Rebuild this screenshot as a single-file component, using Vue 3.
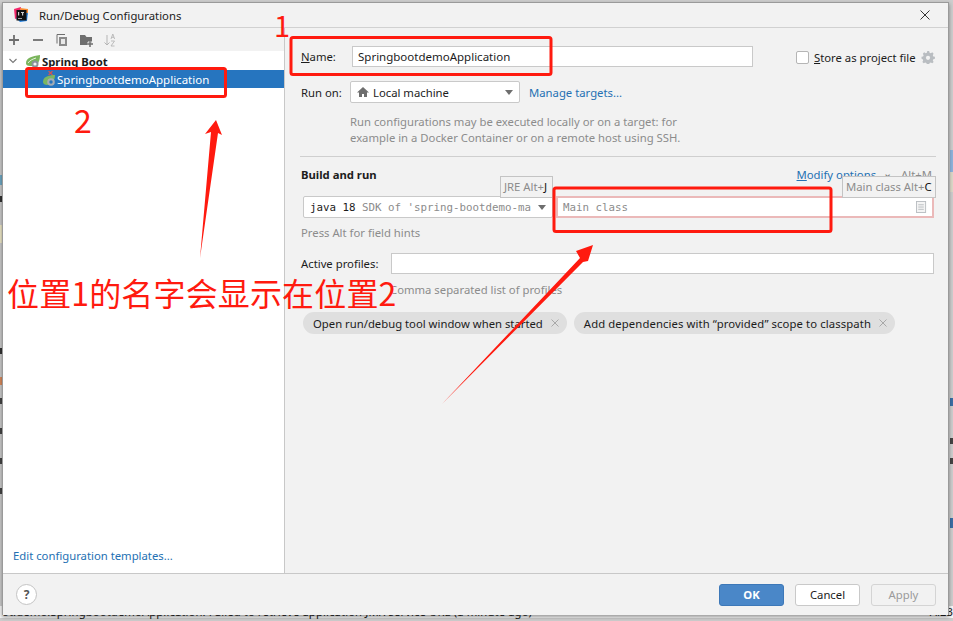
<template>
  <div class="page">
    <div class="backdrop-status">ot.demo.SpringbootdemoApplication: Failed to retrieve application JMX service URL (a minute ago)</div>
    <div class="backdrop-time">A:23</div>
    <i v-for="bit in backdropBits" :key="bit.top + bit.left" class="backdrop-bit" :style="bit"></i>

    <div class="dialog">
      <header class="titlebar">
        <svg class="app-logo" viewBox="0 0 16 16" width="16" height="16">
          <path d="M1 2 L8 0 L7 10 L2 12Z" fill="#f2266a" />
          <path d="M7 1 L15 2 L15 8 L9 8Z" fill="#fb8c2f" />
          <path d="M3 11 L7 15 L14 14 L15 6 L8 6Z" fill="#2586e8" />
          <rect x="3.500" y="3" width="10" height="10.500" fill="#111" />
          <path d="M5 5h1.200v3.500H5zM8 5h3v1H10.200v2.500H9V6H8zM5 11.300h4v.7H5z" fill="#ccc" />
        </svg>
        <span class="title">Run/Debug Configurations</span>
        <svg class="close" viewBox="0 0 10 10" width="10" height="10">
          <path d="M.5.500l9 9M9.500.500l-9 9" stroke="#333" stroke-width="1" fill="none" />
        </svg>
      </header>

      <div class="body">
        <aside class="sidebar">
          <div class="toolbar">
            <svg v-for="icon in toolbarIcons" :key="icon.name" viewBox="0 0 16 16" width="16" height="16" v-html="icon.svg"></svg>
          </div>
          <div class="tree">
            <div class="tree-row group-row">
              <svg class="chevron" viewBox="0 0 10 10" width="10" height="10">
                <path d="M1.500 3 L5 6.500 L8.500 3" fill="none" stroke="#777" stroke-width="1.100" />
              </svg>
              <svg class="boot-icon" viewBox="0 0 16 16" width="16" height="16">
                <path d="M1 10 C1 5 7 3 15 2 C15 8 13 13 7 13 C4 13 1 13 1 10Z" fill="#7ab55c" />
                <path d="M3 10 C5 7 8 6 11 5" stroke="#fff" stroke-width=".8" fill="none" />
                <circle cx="10" cy="11" r="3.500" fill="#8b9299" />
                <circle cx="10" cy="11" r="1.600" fill="#f2f2f2" />
              </svg>
              <span class="group-label">Spring Boot</span>
            </div>
            <div class="tree-row selected-row">
              <svg class="boot-icon" viewBox="0 0 16 16" width="16" height="16">
                <path d="M1 11 C1 6 6 4 13 4 C13 10 9 14 5 14 C3 14 1 13 1 11Z" fill="#7bb661" />
                <circle cx="9" cy="11" r="3.800" fill="#a3acb5" />
                <circle cx="9" cy="11" r="1.700" fill="#2675bf" />
                <path d="M6.500 0l4 4M10.500 0l-4 4" stroke="#d9534f" stroke-width="1.100" />
              </svg>
              <span class="config-name">SpringbootdemoApplication</span>
            </div>
          </div>
          <a class="link templates">Edit configuration templates...</a>
        </aside>

        <main class="form">
          <div class="name-row">
            <label class="row-label name-label"><u>N</u>ame:</label>
            <input class="text-input name-input" value="SpringbootdemoApplication" />
            <span class="checkbox"></span>
            <span class="store-label"><u>S</u>tore as project file</span>
            <svg class="gear" viewBox="0 0 16 16" width="14" height="14">
              <path d="M8 1l1.300.2.500 1.800 1.400.6 1.700-.9 1.500 1.500-.9 1.700.6 1.400 1.800.5v2.200l-1.800.5-.6 1.400.9 1.700-1.500 1.500-1.700-.9-1.400.6-.5 1.800H6.700l-.5-1.800-1.400-.6-1.700.9-1.500-1.500.9-1.700-.6-1.400L.6 10V7.800l1.800-.5.6-1.400-.9-1.700L3.600 2.700l1.700.9 1.400-.6.5-1.800z" fill="#b9bdc1" />
              <circle cx="8" cy="8.900" r="2.400" fill="#f2f2f2" />
            </svg>
          </div>

          <div class="run-row">
            <label class="row-label">Run on:</label>
            <div class="select local-select">
              <svg viewBox="0 0 12 12" width="12" height="12">
                <path d="M6 1 L12 6.500 H10 V11 H7 V8 H5 V11 H2 V6.500 H0Z" fill="#6e6e6e" />
              </svg>
              <span class="select-text">Local machine</span>
              <i class="caret"></i>
            </div>
            <a class="link">Manage targets...</a>
          </div>

          <p class="hint run-hint">Run configurations may be executed locally or on a target: for<br />example in a Docker Container or on a remote host using SSH.</p>

          <hr class="separator" />

          <div class="section-head">
            <strong>Build and run</strong>
            <span class="modify"><a class="link"><u>M</u>odify options</a><span class="modify-chevron">⌄</span><span class="shortcut">Alt+M</span></span>
          </div>

          <div class="build-row">
            <div class="select jre-select">
              <span class="mono"><b>java 18</b> SDK of 'spring-bootdemo-ma</span>
              <i class="caret"></i>
            </div>
            <div class="main-class">
              <span class="mono">Main class</span>
              <svg viewBox="0 0 12 14" width="11" height="13">
                <rect x=".5" y=".5" width="10" height="12" fill="#f4f4f4" stroke="#b8bcc0" />
                <path d="M2.500 4h6M2.500 6.500h6M2.500 9h6" stroke="#b8bcc0" />
              </svg>
            </div>
          </div>

          <p class="hint press-hint">Press Alt for field hints</p>

          <div class="profiles-row">
            <label class="row-label">Active profiles:</label>
            <input class="text-input profiles-input" />
          </div>
          <p class="hint comma-hint">Comma separated list of profiles</p>

          <div class="chips">
            <span v-for="chip in chips" :key="chip" class="chip">{{ chip }}<svg viewBox="0 0 8 8" width="8" height="8"><path d="M.5.500l7 7M7.500.500l-7 7" stroke="#a8a8a8" fill="none" /></svg></span>
          </div>

          <span class="key-tip jre-tip">JRE Alt+<b>J</b></span>
          <span class="key-tip main-tip">Main class Alt+<b>C</b></span>
        </main>
      </div>

      <footer class="footer">
        <button class="help">?</button>
        <div class="buttons">
          <button class="btn primary">OK</button>
          <button class="btn">Cancel</button>
          <button class="btn disabled">Apply</button>
        </div>
      </footer>
    </div>

    <!-- red markup drawn on top of the screenshot -->
    <svg class="markup" viewBox="0 0 953 621" width="953" height="621">
      <g fill="none" stroke="#ff1a0f" stroke-width="3">
        <rect x="291" y="37.500" width="260" height="37" rx="2" />
        <rect x="26.500" y="68.500" width="199" height="28" rx="2" />
        <rect x="554" y="188" width="277" height="43.500" rx="2" />
      </g>
      <g fill="#ff1a0f">
        <polygon points="216,120 222,135 218,133 200,258 211,132 205,134" />
        <polygon points="593,245 588,261 583,262 442,404 580,258 576,251" />
      </g>
    </svg>
    <span class="note num-one">1</span>
    <span class="note num-two">2</span>
    <span class="note big-note">位置1的名字会显示在位置2</span>
  </div>
</template>

<script setup>
const chips = [
  'Open run/debug tool window when started',
  'Add dependencies with “provided” scope to classpath',
]

const toolbarIcons = [
  { name: 'add', svg: '<path d="M8 3v10M3 8h10" stroke="#6e6e6e" stroke-width="1.800"/>' },
  { name: 'remove', svg: '<path d="M3 8h10" stroke="#6e6e6e" stroke-width="1.800"/>' },
  { name: 'copy', svg: '<path d="M3 2.500h8M3 2.500v9" stroke="#6e6e6e" fill="none"/><rect x="5" y="5" width="8" height="9" fill="#8a8a8a"/><rect x="7" y="7" width="4" height="5" fill="#e8e8e8"/>' },
  { name: 'folder', svg: '<path d="M2 3h5l1.500 2H14v8H2z" fill="#6e6e6e"/><path d="M12 9v6M9 12h6" stroke="#f2f2f2" stroke-width="3"/><path d="M12 9v6M9 12h6" stroke="#6e6e6e" stroke-width="1.500"/>' },
  { name: 'sort', svg: '<path d="M5 3v10M2.500 10.500L5 13l2.500-2.500" stroke="#b5b5b5" fill="none"/><path d="M9 7l1.800-5 1.800 5M9.700 5.300h2.300M9 9h3.500L9 14h3.500" stroke="#b5b5b5" fill="none" stroke-width=".9"/>' },
]

// slivers of the IDE window that peek out beside the dialog
const backdropBits = [
  { left: '0', top: '175px', height: '10px', background: '#6fa8c4' },
  { left: '0', top: '196px', height: '6px', background: '#333' },
  { left: '0', top: '225px', height: '18px', background: '#eee8c8' },
  { left: '0', top: '348px', height: '6px', background: '#333' },
  { left: '0', top: '377px', height: '8px', background: '#d98a5c' },
  { left: '0', top: '398px', height: '6px', background: '#444' },
  { left: '0', top: '428px', height: '6px', background: '#444' },
  { left: '0', top: '458px', height: '6px', background: '#444' },
  { left: '0', top: '488px', height: '6px', background: '#444' },
  { left: '950px', top: '150px', height: '22px', background: '#8fb3dc' },
  { left: '950px', top: '172px', height: '20px', background: '#dcd8c8' },
  { left: '950px', top: '398px', height: '8px', background: '#3a6ea5' },
  { left: '950px', top: '438px', height: '6px', background: '#444' },
  { left: '950px', top: '458px', height: '6px', background: '#444' },
  { left: '950px', top: '518px', height: '10px', background: '#3a6ea5' },
]
</script>

<style>
html,
body {
  margin: 0;
  background: #cfcfcf;
}
</style>

<style scoped>
.page {
  position: relative;
  width: 953px;
  height: 621px;
  overflow: hidden;
  padding: 2px 4px 0 2px;
  box-sizing: border-box;
  background: #cdcdcd;
  font-family: "Noto Sans", "Open Sans", sans-serif;
  font-size: 11.3px;
  color: #1c1c1c;
}

.backdrop-status {
  position: absolute;
  left: 0;
  right: 0;
  top: 606px;
  height: 12px;
  line-height: 12px;
  background: #f7f7f7;
  padding-left: 2px;
  letter-spacing: 0.1px;
  white-space: nowrap;
  color: #222;
}

.backdrop-time {
  position: absolute;
  right: 0;
  top: 606px;
  line-height: 12px;
  color: #222;
}

.backdrop-bit {
  position: absolute;
  width: 3px;
}

.dialog {
  position: relative;
  display: flex;
  flex-direction: column;
  height: 613px;
  background: #f2f2f2;
  border: 1px solid #9a9a9a;
  border-bottom: 0;
  box-sizing: border-box;
  box-shadow: 0 2px 4px rgba(0, 0, 0, 0.4);
}

.titlebar {
  display: flex;
  align-items: center;
  height: 25px;
  padding: 0 18px 0 10px;
  box-sizing: border-box;
  border-bottom: 1px solid #d1d1d1;
  flex: none;
}

.app-logo {
  margin-right: 10px;
}

.title {
  flex: 1;
  color: #222;
}

.body {
  display: flex;
  flex: 1;
  min-height: 0;
}

.sidebar {
  display: flex;
  flex-direction: column;
  width: 281px;
  flex: none;
  border-right: 1px solid #c8c8c8;
}

.toolbar {
  display: flex;
  align-items: center;
  gap: 8px;
  height: 23px;
  padding: 0 3px;
  flex: none;
  background: #f2f2f2;
}

.tree {
  flex: 1;
  background: #fff;
  padding-top: 1px;
}

.tree-row {
  display: flex;
  align-items: center;
  height: 18px;
}

.group-row {
  padding-left: 5px;
}

.chevron {
  margin-right: 7px;
}

.boot-icon {
  flex: none;
}

.group-label {
  margin-left: 1px;
  font-weight: 700;
}

.selected-row {
  padding-left: 39px;
  background: #2675bf;
  color: #fff;
}

.selected-row .boot-icon {
  margin-right: -1px;
}

.config-name {
  font-size: 11.5px;
}

.templates {
  position: absolute;
  left: 10px;
  bottom: 52px;
}

.link {
  color: #2470b3;
}

.form {
  position: relative;
  flex: 1;
  padding: 18px 12px 0 16px;
  min-width: 0;
}

.row-label {
  display: inline-block;
  flex: none;
}

.text-input {
  box-sizing: border-box;
  flex: none;
  height: 21px;
  border: 1px solid #c9c9c9;
  background: #fff;
  padding: 0 5px;
  font: inherit;
  color: inherit;
  outline: none;
}

.name-row {
  display: flex;
  align-items: center;
  height: 21px;
  white-space: nowrap;
}

.name-label {
  width: 51px;
}

.name-input {
  width: 401px;
  font-size: 11.5px;
}

.checkbox {
  flex: none;
  width: 11px;
  height: 11px;
  margin: 1px 0 0 43px;
  border: 1px solid #b5b5b5;
  border-radius: 2px;
  background: #fff;
}

.store-label {
  margin: 1px 0 0 5px;
}

.gear {
  flex: none;
  margin-left: 5px;
}

.run-row {
  display: flex;
  align-items: center;
  margin-top: 14px;
  height: 22px;
}

.run-row .row-label {
  width: 49px;
}

.select {
  display: flex;
  align-items: center;
  box-sizing: border-box;
  height: 22px;
  background: #fff;
  border: 1px solid #c9c9c9;
  border-radius: 2px;
}

.local-select {
  width: 170px;
  padding: 0 6px;
}

.select-text {
  flex: 1;
  margin-left: 4px;
}

.caret {
  flex: none;
  width: 0;
  height: 0;
  border-left: 4px solid transparent;
  border-right: 4px solid transparent;
  border-top: 5px solid #6e6e6e;
}

.run-row .link {
  margin-left: 9px;
}

.hint {
  margin: 0;
  color: #8c8c8c;
}

.run-hint {
  margin: 11px 0 0 49px;
  line-height: 16px;
}

.separator {
  margin: 10px 0 0 -1px;
  border: 0;
  border-top: 1px solid #cfcfcf;
}

.section-head {
  display: flex;
  justify-content: space-between;
  align-items: center;
  margin-top: 9px;
  height: 16px;
}

.modify {
  display: flex;
  align-items: center;
  margin-right: 4px;
}

.modify-chevron {
  margin: -3px 9px 0 7px;
  color: #777;
}

.shortcut {
  color: #8c8c8c;
}

.build-row {
  display: flex;
  gap: 3px;
  margin: 14px 0 0 2px;
  height: 22px;
}

.jre-select {
  flex: none;
  width: 250px;
  padding: 0 6px;
  justify-content: space-between;
}

.mono {
  font-family: "DejaVu Sans Mono", monospace;
  font-size: 10.8px;
  color: #8c8c8c;
  white-space: nowrap;
}

.mono b {
  font-weight: 400;
  color: #1c1c1c;
}

.main-class {
  display: flex;
  align-items: center;
  justify-content: space-between;
  flex: none;
  width: 378px;
  box-sizing: border-box;
  padding: 0 5px;
  border: 2px solid #ebb9b9;
  background: #fff;
}

.press-hint {
  margin-top: 7px;
}

.profiles-row {
  display: flex;
  align-items: center;
  margin: 13px 2px 0 0;
}

.profiles-row .row-label {
  width: 90px;
}

.profiles-input {
  flex: 1;
}

.comma-hint {
  margin: 8px 0 0 89px;
}

.chips {
  display: flex;
  gap: 7px;
  margin: 15px 0 0 2px;
}

.chip {
  display: flex;
  align-items: center;
  gap: 8px;
  height: 22px;
  padding: 0 8px 0 10px;
  border-radius: 11px;
  background: #dfdfdf;
  white-space: nowrap;
}

.chip + .chip {
  letter-spacing: 0.1px;
}

.key-tip {
  position: absolute;
  padding: 0 5px 0 3px;
  height: 20px;
  line-height: 20px;
  background: #f2f2f2;
  border: 1px solid #c4c4c4;
  color: #8c8c8c;
  white-space: nowrap;
}

.key-tip b {
  font-weight: 400;
  color: #111;
}

.jre-tip {
  left: 215px;
  top: 148px;
}

.main-tip {
  left: 557px;
  top: 148px;
  padding-right: 3px;
}

.footer {
  display: flex;
  align-items: center;
  justify-content: space-between;
  flex: none;
  height: 42px;
  padding: 0 12px 0 13px;
  box-sizing: border-box;
  border-top: 1px solid #c8c8c8;
}

.help {
  width: 21px;
  height: 21px;
  padding: 0;
  border: 1px solid #c4c4c4;
  border-radius: 50%;
  background: #fff;
  font: 700 12px "Noto Sans", sans-serif;
  color: #555;
}

.buttons {
  display: flex;
  gap: 11px;
}

.btn {
  width: 65px;
  height: 22px;
  padding: 0;
  border: 1px solid #c9c9c9;
  border-radius: 3px;
  background: #fff;
  font: 11.3px "Noto Sans", sans-serif;
  color: #1c1c1c;
}

.btn.primary {
  background: #4a87c8;
  border-color: #3d78b8;
  color: #fff;
  font-weight: 700;
}

.btn.disabled {
  background: #f2f2f2;
  border-color: #d4d4d4;
  color: #9a9a9a;
}

.markup {
  position: absolute;
  left: 0;
  top: 0;
  pointer-events: none;
}

.note {
  position: absolute;
  color: #ff1a0f;
  font-family: "Noto Sans CJK SC", "Noto Sans", sans-serif;
  line-height: 1;
  white-space: nowrap;
}

.num-one {
  left: 274px;
  top: 10px;
  font-size: 29px;
}

.num-two {
  left: 74px;
  top: 103px;
  font-size: 32px;
}

.big-note {
  left: 7px;
  top: 276px;
  font-size: 32px;
  letter-spacing: 0.15px;
}
</style>
